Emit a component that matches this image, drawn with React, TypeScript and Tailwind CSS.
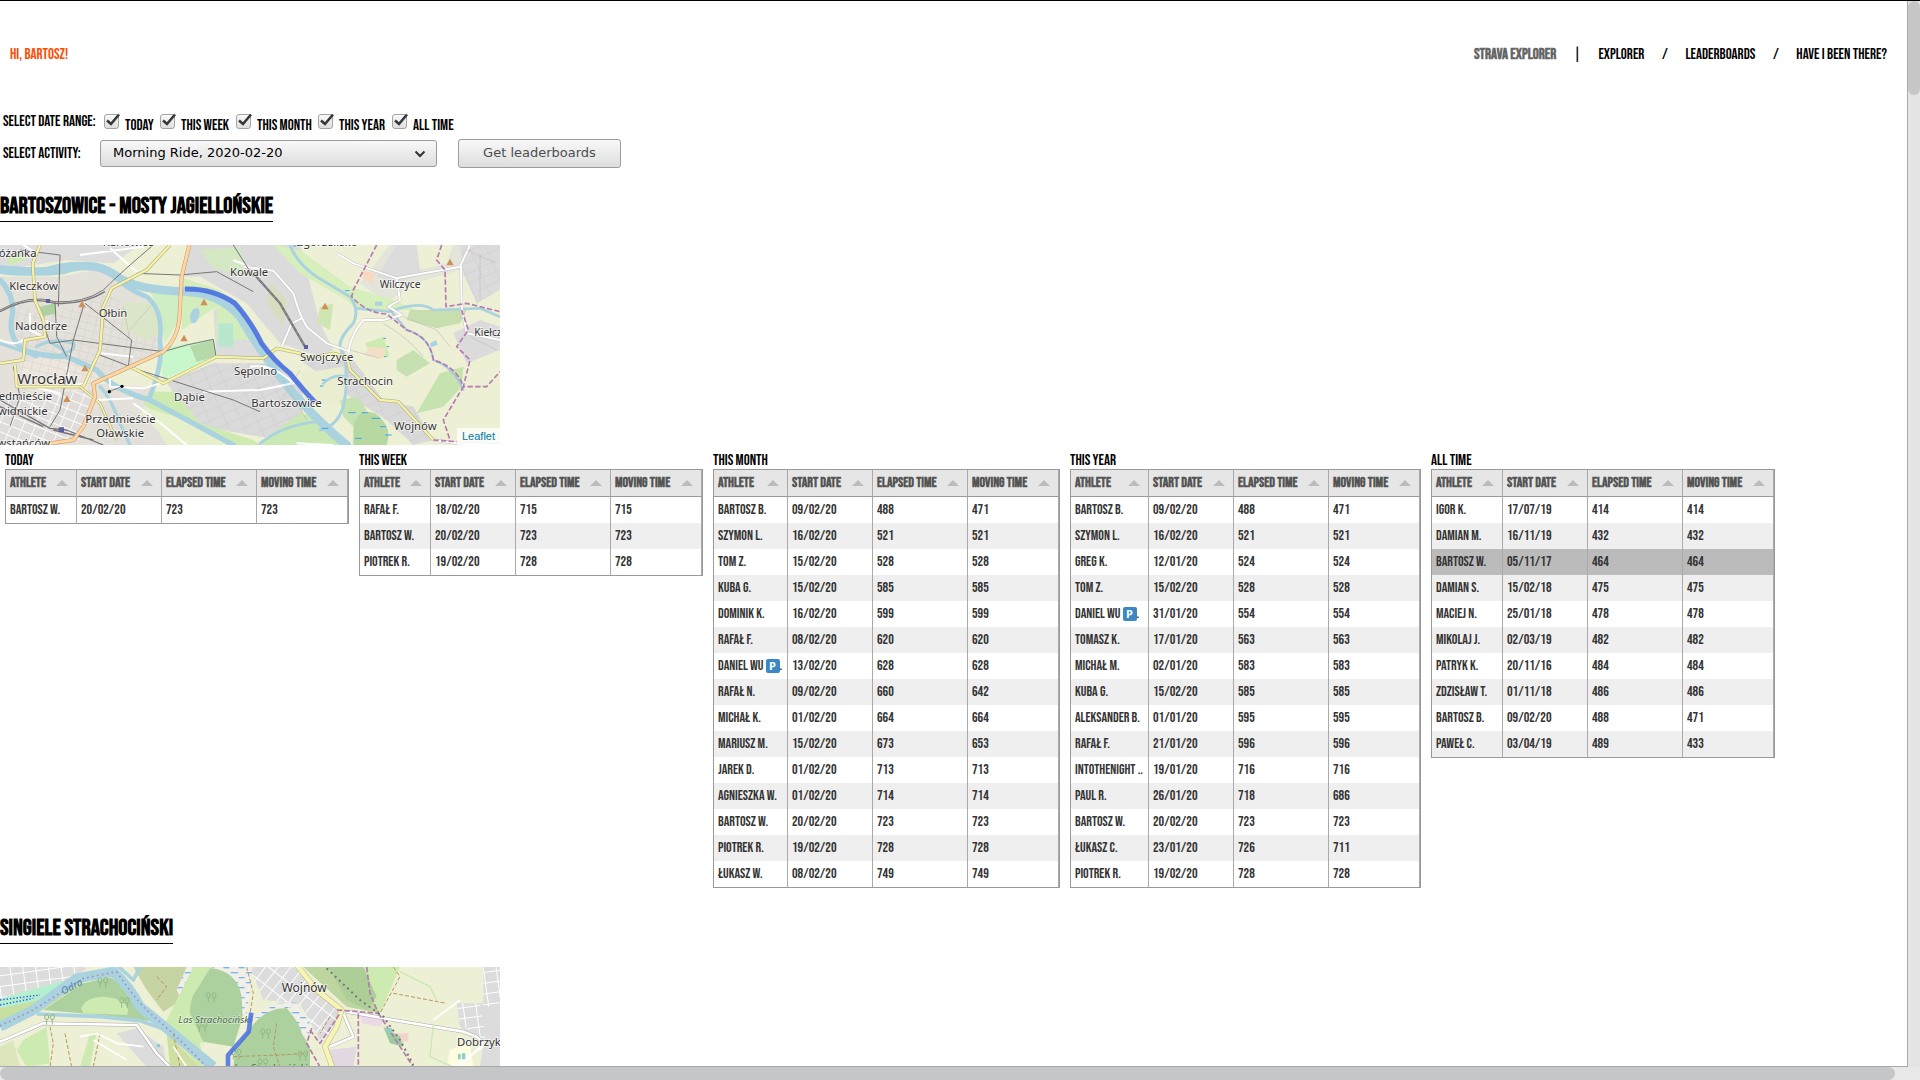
import type { ReactNode } from "react";

type Row = [string, string, number, number];
type Board = { title: string; athleteCol: string; width: string; selected?: number; rows: Row[] };

const BOARDS: Board[] = [
  {
    title: "Today",
    athleteCol: "w-[71px]",
    width: "w-[344px]",
    rows: [["Bartosz W.", "20/02/20", 723, 723]],
  },
  {
    title: "This week",
    athleteCol: "w-[71px]",
    width: "w-[344px]",
    rows: [
      ["Rafał F.", "18/02/20", 715, 715],
      ["Bartosz W.", "20/02/20", 723, 723],
      ["Piotrek R.", "19/02/20", 728, 728],
    ],
  },
  {
    title: "This month",
    athleteCol: "w-[74px]",
    width: "w-[347px]",
    rows: [
      ["Bartosz B.", "09/02/20", 488, 471],
      ["Szymon L.", "16/02/20", 521, 521],
      ["Tom Z.", "15/02/20", 528, 528],
      ["Kuba G.", "15/02/20", 585, 585],
      ["Dominik K.", "16/02/20", 599, 599],
      ["Rafał F.", "08/02/20", 620, 620],
      ["Daniel Wu 🅿.", "13/02/20", 628, 628],
      ["Rafał N.", "09/02/20", 660, 642],
      ["Michał K.", "01/02/20", 664, 664],
      ["Mariusz M.", "15/02/20", 673, 653],
      ["Jarek D.", "01/02/20", 713, 713],
      ["Agnieszka W.", "01/02/20", 714, 714],
      ["Bartosz W.", "20/02/20", 723, 723],
      ["Piotrek R.", "19/02/20", 728, 728],
      ["Łukasz W.", "08/02/20", 749, 749],
    ],
  },
  {
    title: "This year",
    athleteCol: "w-[78px]",
    width: "w-[351px]",
    rows: [
      ["Bartosz B.", "09/02/20", 488, 471],
      ["Szymon L.", "16/02/20", 521, 521],
      ["Greg K.", "12/01/20", 524, 524],
      ["Tom Z.", "15/02/20", 528, 528],
      ["Daniel Wu 🅿.", "31/01/20", 554, 554],
      ["Tomasz K.", "17/01/20", 563, 563],
      ["Michał M.", "02/01/20", 583, 583],
      ["Kuba G.", "15/02/20", 585, 585],
      ["Aleksander B.", "01/01/20", 595, 595],
      ["Rafał F.", "21/01/20", 596, 596],
      ["Intothenight ..", "19/01/20", 716, 716],
      ["Paul R.", "26/01/20", 718, 686],
      ["Bartosz W.", "20/02/20", 723, 723],
      ["Łukasz C.", "23/01/20", 726, 711],
      ["Piotrek R.", "19/02/20", 728, 728],
    ],
  },
  {
    title: "All time",
    athleteCol: "w-[71px]",
    width: "w-[344px]",
    selected: 2,
    rows: [
      ["Igor K.", "17/07/19", 414, 414],
      ["Damian M.", "16/11/19", 432, 432],
      ["Bartosz W.", "05/11/17", 464, 464],
      ["Damian S.", "15/02/18", 475, 475],
      ["Maciej N.", "25/01/18", 478, 478],
      ["Mikolaj J.", "02/03/19", 482, 482],
      ["Patryk K.", "20/11/16", 484, 484],
      ["Zdzisław T.", "01/11/18", 486, 486],
      ["Bartosz B.", "09/02/20", 488, 471],
      ["Paweł C.", "03/04/19", 489, 433],
    ],
  },
];

function AthleteName({ name }: { name: string }) {
  const [before, after] = name.split("🅿");
  if (after === undefined) return <>{name}</>;
  return (
    <span className="flex items-center">
      <span className="whitespace-pre">{before.trimEnd()}</span>
      <span className="ml-0.5 flex size-3.5 shrink-0 items-center justify-center rounded-[2px] bg-[#3b88c3] font-['Open_Sans',sans-serif] text-[11px] leading-3 font-bold text-white">
        P
      </span>
      {after}
    </span>
  );
}

function Leaderboard({ board }: { board: Board }) {
  return (
    <section className="shrink-0">
      <h3 className="h-6 pt-1 text-[15px] leading-6 font-medium">{board.title}</h3>
      <table
        className={`${board.width} table-fixed border-separate border-spacing-0 border border-[#999] text-left text-[14px] leading-5 text-[#333]`}
      >
        <colgroup>
          <col className={board.athleteCol} />
          <col className="w-[85px]" />
          <col className="w-[95px]" />
          <col className="w-[91px]" />
        </colgroup>
        <thead>
          <tr className="h-[27px] bg-[#e6e6e6] text-[#555]">
            {["Athlete", "Start date", "Elapsed time", "Moving time"].map((label) => (
              <th key={label} className="border-r border-b border-r-[#aaa] border-b-[#999] py-0 pr-2 pl-1">
                <div className="flex items-center justify-between whitespace-nowrap">
                  {label}
                  <span className="border-x-[6px] border-b-[6px] border-x-transparent border-b-[#bbb]" />
                </div>
              </th>
            ))}
          </tr>
        </thead>
        <tbody>
          {board.rows.map((row, i) => (
            <tr
              key={i}
              className={`h-[26px] ${i === board.selected ? "bg-[#bbb]" : i % 2 ? "bg-[#efefef]" : "bg-white"}`}
            >
              {row.map((cell, j) => (
                <td key={j} className="overflow-hidden border-r border-[#aaa] py-0 pr-0 pl-1 whitespace-nowrap">
                  {j === 0 ? <AthleteName name={row[0]} /> : cell}
                </td>
              ))}
            </tr>
          ))}
        </tbody>
      </table>
    </section>
  );
}

/* ---------- map drawing helpers ---------- */

function Line({ d, c, w, dash }: { d: string; c: string; w: number; dash?: string }) {
  return <path d={d} fill="none" stroke={c} strokeWidth={w} strokeDasharray={dash} strokeLinejoin="round" />;
}

function Road({ d, c, w, edge }: { d: string; c: string; w: number; edge: string }) {
  return (
    <>
      <Line d={d} c={edge} w={w + 3} />
      <Line d={d} c={c} w={w} />
    </>
  );
}

function Place({ x, y, size = 34, children }: { x: number; y: number; size?: number; children: ReactNode }) {
  return (
    <text
      x={x}
      y={y}
      fontSize={size}
      fill="#333"
      stroke="#fff"
      strokeOpacity={0.7}
      strokeWidth={5}
      paintOrder="stroke"
      fontFamily="'Noto Sans', sans-serif"
    >
      {children}
    </text>
  );
}

const peak = (x: number, y: number) => `M${x - 11} ${y + 10}L${x} ${y - 10}L${x + 11} ${y + 10}z`;

function WroclawMap() {
  return (
    <svg viewBox="0 15 1500 600" className="block size-full" role="img" aria-label="Bartoszowice - Mosty Jagiellońskie">
      <defs>
        <pattern id="blocks" width="26" height="22" patternUnits="userSpaceOnUse" patternTransform="rotate(14)">
          <path d="M0 0H26M0 0V22" stroke="#c9c5c3" strokeWidth="2" fill="none" />
        </pattern>
        <pattern id="whiteBlocks" width="34" height="28" patternUnits="userSpaceOnUse" patternTransform="rotate(22)">
          <path d="M0 0H34M0 0V28" stroke="#fff" strokeWidth="5" fill="none" />
        </pattern>
        <pattern id="lots" width="44" height="30" patternUnits="userSpaceOnUse" patternTransform="rotate(-24)">
          <path d="M0 0H44M0 0V30" stroke="#c6c4c4" strokeWidth="2" fill="none" />
        </pattern>
      </defs>
      <rect y="15" width="1500" height="600" fill="#eef0d5" />
      {/* built-up areas */}
      <path d="M0 15H420L340 70L200 60L0 90z" fill="#deddde" />
      <path d="M0 110L180 110L330 80L420 160L480 220L490 330L380 380L270 430L450 440L480 470L420 520L500 615H0z" fill="#e4e0da" />
      <path d="M40 190L140 230L320 160L470 250L485 330L290 410L60 360z" fill="url(#blocks)" />
      <path d="M60 370L200 330L300 400L270 470L80 470z" fill="#ece6dc" />
      <path d="M60 370L200 330L300 400L270 470L80 470z" fill="url(#blocks)" />
      <path d="M0 470L280 450L240 600L0 615z" fill="#dfdcda" />
      <path d="M0 470L280 450L240 600L0 615z" fill="url(#whiteBlocks)" />
      <path d="M300 490L420 520L520 615H330L270 570z" fill="#e2dfda" />
      <path d="M570 15H900L960 250L1000 330L960 350L840 310L740 190L600 110L550 110z" fill="#dcdbdb" />
      <path d="M640 210L690 190L790 330L830 360L650 350z" fill="#dcdcdc" />
      <path d="M500 425L640 370L840 370L910 440L900 600L780 590L610 560L520 460z" fill="#dadada" />
      <path d="M500 425L640 370L840 370L910 440L900 600L780 590L610 560L520 460z" fill="url(#lots)" />
      <path d="M1170 15L1420 15L1380 90L1240 130L1160 190L1080 130z" fill="#e3e4da" />
      <path d="M1190 15L1260 15L1270 100L1190 130L1130 110z" fill="#dddcdc" />
      <path d="M1380 15H1500V150L1430 190L1390 100z" fill="#dcdbdb" />
      <path d="M1380 15H1500V150L1430 190L1390 100z" fill="url(#lots)" />
      <path d="M1250 15H1360L1340 70L1260 90z" fill="#edf0d4" />
      <path d="M900 360L1060 360L1150 480L1240 500L1300 600L1240 615L1160 540L1050 470z" fill="#dad9d9" />
      <path d="M900 360L1060 360L1150 480L1240 500L1300 600L1240 615L1160 540L1050 470z" fill="url(#lots)" />
      <path d="M900 400L1030 380L1040 470L1010 500L940 480z" fill="#eaedcf" />
      <path d="M1360 280L1440 240L1500 260V330L1400 370z" fill="#dcdbdb" />
      {/* greenery */}
      <path d="M370 185L470 190L480 280L440 300L370 270z" fill="#dbe6c9" />
      <path d="M440 130L545 160L530 250L495 310L480 220z" fill="#d0eec4" />
      <path d="M550 115L660 150L730 220L750 300L650 300L650 200L545 270z" fill="#d3edbd" />
      <path d="M505 320L640 298L650 350L540 395L490 420L480 350z" fill="#c8f7cc" />
      <path d="M570 318L640 300L646 350L590 365z" fill="#b5d9a8" />
      <path d="M445 455L520 455L600 550L760 600L780 615H560L430 490z" fill="#cdebb0" />
      <path d="M430 500L560 540L700 615H500z" fill="#e6f0cc" />
      <path d="M770 615L900 520L960 530L1020 615z" fill="#c9e8b4" />
      <path d="M1020 480L1070 470L1100 510L1060 560L1030 530z" fill="#c4e3b0" />
      <path d="M820 15L900 30L1050 140L1180 180L1250 210L1070 210L1040 180L900 100z" fill="#d6efbc" />
      <path d="M1230 210L1400 210L1380 250L1310 265L1220 240z" fill="#c7dfae" />
      <path d="M1190 360L1240 330L1290 370L1220 410L1190 390z" fill="#c7e0b2" />
      <path d="M1095 310L1150 290L1170 350L1110 340z" fill="#cdebb0" />
      <path d="M1110 320L1160 325L1150 355L1090 345z" fill="#f3dfc6" />
      <path d="M1320 400L1390 380L1385 440L1330 500L1250 520z" fill="#c6e2ae" />
      <path d="M810 130L860 180L850 260L800 190z" fill="#d7dec0" />
      <path d="M960 200L1000 190L990 270L950 250z" fill="#cfe6b4" />
      <path d="M1060 560Q1075 500 1125 520Q1180 560 1160 615H1060z" fill="#b6d9a2" />
      <path d="M120 200L165 190L170 220L125 230z" fill="#aed1a0" />
      <path d="M20 50L70 40L75 60L30 75z" fill="#cdebb0" />
      <path d="M600 30L720 20L740 110L640 85z" fill="#d5e8c4" />
      <path d="M655 250h45v70h-45z" fill="#b9e7cd" />
      <path d="M1085 90L1125 100L1120 130L1090 120z" fill="#f6d9c2" />
      {/* water */}
      <g strokeLinecap="round">
        <Line d="M0 95Q60 105 120 95Q240 50 330 95Q380 150 440 170Q490 210 480 300Q490 370 450 470" c="#aad3df" w={14} />
        <Line d="M0 88Q110 100 190 90Q280 60 345 105Q400 150 560 155Q660 160 720 230Q790 350 880 460Q960 550 1040 615" c="#aad3df" w={26} />
        <Line d="M0 120Q40 160 38 220Q20 290 70 330Q130 350 200 350L290 390Q340 450 450 480Q560 540 700 615" c="#aad3df" w={16} />
        <Line d="M0 310Q60 330 110 350M110 320Q160 290 220 310Q230 330 190 340M150 305L190 330M300 440Q330 470 360 550L390 615" c="#aad3df" w={10} />
        <Line d="M870 15Q890 70 950 110L1050 170Q1080 210 1060 250Q1000 310 1030 340Q1050 400 1030 500Q1010 560 960 570" c="#aad3df" w={9} />
        <Line d="M780 610Q860 550 960 545M970 430Q1000 400 1040 410M1070 205L1170 215Q1260 180 1300 210L1440 205L1500 230" c="#aad3df" w={8} />
        <Line d="M1170 210L1220 270Q1290 290 1300 360Q1360 380 1390 450" c="#a7c9dc" w={6} />
        <path d="M570 230Q575 200 595 205Q605 220 590 245Q572 260 570 230zM1125 185h22v12h-22zM1290 310l18 -10l5 14l-20 8z" fill="#aad3df" />
      </g>
      {/* minor streets */}
      <Line
        d="M70 15L110 40M240 45L430 20M330 25L410 95M700 60L760 85M0 300Q40 320 70 300M90 220L90 270L130 290M300 340L400 350M330 410L330 440L430 445L480 430M400 490L470 540L560 615M290 480L400 475M610 455L780 450M100 440L180 460M200 380L210 440L250 430M130 240L200 270M1000 615L890 610M750 380Q820 370 880 430L780 450"
        c="#fff"
        w={6}
      />
      <Road
        d="M730 80L820 92L880 160Q900 230 920 260L980 310L1050 335M845 320L875 250L905 235M1010 40L1060 70L1190 115L1380 80L1410 15M1383 80L1385 200L1400 280L1500 300M1190 115L1200 180L1165 200L1205 225L1150 240L1090 240Q1040 300 1045 370M1300 600L1370 610L1500 615"
        c="#fff"
        w={6}
        edge="#c4c0c0"
      />
      <Line
        d="M1050 330L1140 355M1150 250Q1220 290 1270 350M1210 230L1310 270L1350 320M1400 30L1490 70M1440 40V180M1410 290L1490 330M850 420L920 540M900 390L850 470M370 200L390 300M450 200L390 270"
        c="#c1bcbc"
        w={2}
      />
      {/* tracks */}
      <Line
        d="M0 210Q90 160 165 185Q250 190 310 150Q370 90 460 15M165 185L170 290L200 350M105 180L150 310L220 300L490 335L560 315L640 298L648 350M255 190L395 300L385 380L700 480L780 515M250 200L220 300L180 510L150 560M60 30L180 45L175 200M40 380L60 470L30 560M300 345L390 380M410 100L540 105L650 95L760 155M700 15L760 110"
        c="#777"
        w={3}
      />
      <Line d="M0 480L150 565L200 570L310 615M0 500L130 560M160 570L280 600M0 215Q90 165 165 190Q250 195 315 155" c="#777479" w={4} />
      <Line d="M760 100L840 190L915 320" c="#777" w={7} />
      <Line d="M760 100L840 190L915 320" c="#aaa" w={2} dash="10 8" />
      {/* main roads */}
      <Road d="M120 15L98 70L105 180L130 240L135 290L75 300L70 360L0 370M45 375L50 440L250 440L300 330L310 200L335 145L440 90L510 15" c="#f6f3a8" w={7} edge="#a8a57d" />
      <Road d="M390 380L490 430L650 350L790 355L830 325L900 340L920 355L1000 340L1040 350L1050 390L1140 480L1195 485L1300 600" c="#f4f2a4" w={7} edge="#a9a784" />
      <Road d="M240 440L300 490L350 600" c="#f6f3a8" w={5} edge="#a8a57d" />
      <Road d="M568 15L545 110L538 240Q530 300 490 335L280 430L285 470L250 560L220 600L140 612" c="#fcd6a4" w={9} edge="#c99562" />
      {/* borders */}
      <Line
        d="M1130 15L1060 150L1055 170Q1100 220 1160 222L1220 270Q1290 290 1300 360Q1370 380 1390 440L1330 540L1350 600M1325 15L1310 60L1335 90L1338 200L1400 190L1500 215M1385 210L1405 270L1370 320L1410 360L1390 440L1460 440L1500 395M1300 600L1370 605"
        c="#b57bb0"
        w={5}
        dash="16 7"
      />
      <Line
        d="M1045 518h22M1085 518h18M1115 535h25M1140 560h18M1155 585h20M965 420h12M960 438h10M1150 295h8M1160 320h8M1152 350h8M965 565h20M1065 595h20M880 18h10M1035 152h14"
        c="#3fa0f0"
        w={3}
      />
      {/* recorded ride */}
      <path d="M555 147Q640 145 705 190Q750 240 785 310Q820 360 870 400Q910 450 945 487" fill="none" stroke="#3f67e3" strokeOpacity="0.85" strokeWidth="15" />
      <path d={[peak(246, 192), peak(612, 186), peak(552, 294), peak(255, 384), peak(201, 476), peak(975, 198), peak(1350, 66)].join("")} fill="#d08f55" />
      <path d="M138 177h12v12h-12zM176 562h16v14h-16zM912 315h12v12h-12z" fill="#5b5f9c" />
      <path d="M328 455L366 439" stroke="#555" strokeWidth="2" />
      <circle cx="328" cy="455" r="5" />
      <circle cx="366" cy="439" r="5" />
      <Place x={-4} y={50}>óżanka</Place>
      <Place x={308} y={18}>Karłowice</Place>
      <Place x={890} y={18}>Zgorzelisko</Place>
      <Place x={28} y={151}>Kleczków</Place>
      <Place x={296} y={232}>Ołbin</Place>
      <Place x={45} y={270}>Nadodrze</Place>
      <Place x={52} y={433} size={45}>Wrocław</Place>
      <Place x={-4} y={481}>edmieście</Place>
      <Place x={-6} y={524}>widnickie</Place>
      <Place x={-8} y={622}>wstańców</Place>
      <Place x={256} y={550}>Przedmieście</Place>
      <Place x={289} y={592}>Oławskie</Place>
      <Place x={522} y={482}>Dąbie</Place>
      <Place x={690} y={107}>Kowale</Place>
      <Place x={702} y={405}>Sępolno</Place>
      <Place x={754} y={502}>Bartoszowice</Place>
      <Place x={900} y={364}>Swojczyce</Place>
      <Place x={1012} y={436}>Strachocin</Place>
      <Place x={1139} y={145} size={31}>Wilczyce</Place>
      <Place x={1423} y={289} size={31}>Kiełcz</Place>
      <Place x={1182} y={571}>Wojnów</Place>
    </svg>
  );
}

const tree = (x: number, y: number) =>
  `M${x} ${y + 18}v-16M${x - 6} ${y - 4}a6 8 0 1 1 12 0a6 8 0 1 1 -12 0M${x + 17} ${y + 18}v-16M${x + 11} ${y - 4}a6 8 0 1 1 12 0a6 8 0 1 1 -12 0`;

function StrachocinMap() {
  return (
    <svg viewBox="0 201 1500 600" className="block size-full" role="img" aria-label="Singiele Strachociński">
      <defs>
        <pattern id="wetland" width="46" height="30" patternUnits="userSpaceOnUse">
          <path d="M2 8H24M26 23H44" stroke="#4aa3ee" strokeWidth="3" />
        </pattern>
        <pattern id="houses" width="48" height="30" patternUnits="userSpaceOnUse" patternTransform="rotate(-52)">
          <path d="M0 0H48M0 0V30" stroke="#fff" strokeWidth="6" fill="none" />
        </pattern>
        <pattern id="estate" width="38" height="32" patternUnits="userSpaceOnUse" patternTransform="rotate(-8)">
          <path d="M0 0H38M0 0V32" stroke="#fff" strokeWidth="6" fill="none" />
        </pattern>
      </defs>
      <rect y="201" width="1500" height="600" fill="#eef0d5" />
      <path d="M0 201H270L150 270L0 300z" fill="#dddcdc" />
      <path d="M0 201H270L150 270L0 300z" fill="url(#estate)" />
      <path d="M0 295L200 240L210 260L100 330L0 365z" fill="#b4efcf" />
      <path d="M0 325L120 300L240 240L300 215L120 335L0 380z" fill="#c7dfa0" />
      <path d="M130 330L250 250L330 232L400 270L465 365L300 345z" fill="#add19e" />
      <path d="M243 325Q260 290 310 290Q380 295 385 335L380 345L250 340z" fill="#cdebb0" />
      <path d="M400 201H560L530 310L490 335L440 270z" fill="#c5d4a2" />
      <path d="M560 201H760L740 340L720 350L720 280L540 290L530 270z" fill="#f2efe9" />
      <path d="M560 201H760L740 340L720 350L720 280L540 290L530 270z" fill="url(#wetland)" />
      <path d="M580 201H640Q600 260 580 290L600 350L610 430L640 501H600L490 380L520 320z" fill="#cdebb0" />
      <path d="M630 205Q710 210 725 290L728 350L700 440L610 425L570 340Q570 290 590 270z" fill="#add19e" />
      <path d="M600 425L680 470L670 501H610z" fill="#eef0d5" />
      <path d="M760 350L830 310L890 305L935 380L920 410L890 390L870 320L790 360z" fill="#f2efe9" />
      <path d="M760 350L830 310L890 305L935 380L920 410L890 390L870 320L790 360z" fill="url(#wetland)" />
      <path d="M750 385Q800 320 860 325Q900 370 905 400L930 440V501H700L705 450z" fill="#add19e" />
      <path d="M750 201H890L1020 330L1000 400L960 420L900 310L790 300z" fill="#dddcdc" />
      <path d="M750 201H890L1020 330L1000 400L960 420L900 310L790 300z" fill="url(#houses)" />
      <path d="M910 201H1100L1140 340L1040 320z" fill="#bdd6a0" />
      <path d="M1090 201H1200L1140 340L1110 290z" fill="#cdebb0" />
      <path d="M985 201L1090 201L1130 290L1100 330L1040 300z" fill="#adcf97" />
      <path d="M980 450L1070 440L1060 501H1000z" fill="#e2d8e2" />
      <path d="M1080 340L1160 350L1140 380L1085 370z" fill="#ecd9e6" />
      <path d="M1180 400h45v25h-45z" fill="#f3d3cb" />
      <path d="M1150 380L1200 410L1210 440L1170 430z" fill="#9ccba0" />
      <path d="M1450 201H1500V501H1440L1450 430L1380 380L1370 310L1450 310z" fill="#dddcdc" />
      <path d="M1370 310L1440 310L1460 430L1380 370z" fill="url(#estate)" />
      <path d="M1450 201H1500V320H1450z" fill="url(#estate)" />
      <path d="M1350 450L1410 430L1420 501H1340z" fill="#fdfde0" />
      <path d="M70 420L140 380L150 490L80 501L50 450z" fill="#cdebb0" />
      <path d="M0 440L40 420L60 501H0z" fill="#dce6bd" />
      <path d="M270 400L290 395L270 501H240z" fill="#cdebb0" />
      <path d="M350 400L410 385L490 440L500 501H440z" fill="#dddcdc" />
      <path d="M500 400L560 460L600 501H510z" fill="#cfdfa2" />
      <Line d="M0 380L100 330L230 235L340 215Q390 260 420 320L500 385L640 500" c="#aad3df" w={30} />
      <Line d="M350 195L400 240L420 201M110 342L300 350L420 362L500 390" c="#aad3df" w={11} />
      <Line d="M0 378L100 330L250 235L350 215Q400 290 440 330L540 420L620 501" c="#a38fc0" w={5} dash="5 10" />
      <Line d="M0 300L120 285M0 315L100 295" c="#2c49e0" w={4} dash="4 6" />
      <Line d="M150 380L160 430L150 501M195 400L215 501M300 400L280 501M520 400L540 501M700 470L840 465L920 460M830 370L820 440L840 501M1180 280L1340 310M740 201L760 280L750 340M470 230L500 260L470 300M990 350L960 400M1180 201L1200 230L1140 340" c="#b9975b" w={3} dash="12 6" />
      <Road d="M0 425L60 400L130 370L410 375L470 460L510 501" c="#fff" w={8} edge="#a7a7a7" />
      <Road d="M1040 335L1180 360L1390 395L1430 410L1450 430M1030 340L1060 410L990 440" c="#fff" w={8} edge="#aaa" />
      <Line d="M280 420L380 480M240 410L290 400L350 430L430 440M560 501L520 440M1300 360L1380 300M1450 440L1360 501M1380 501L1450 430" c="#fff" w={5} />
      <Line d="M1200 215L1290 260L1310 300M1300 370L1290 470L1360 501" c="#cbe9b0" w={4} />
      <Road d="M890 195L950 270L1025 330L1010 380L975 440L1000 510" c="#f7f5b5" w={14} edge="#b8b584" />
      <Line d="M1100 201L1110 280L1135 340L1075 335L1010 330M1075 340L1075 501M935 385L920 430L960 501M930 390L960 430L1020 340M1135 340L1240 501" c="#b57bb0" w={5} dash="16 7" />
      <Line d="M980 205L1080 300L1150 350L1200 420L1240 495" c="#777" w={6} dash="6 11" />
      <path
        d={[tree(300, 245), tree(625, 290), tree(788, 398), tree(598, 378), tree(900, 465), tree(700, 460), tree(780, 488), tree(365, 305), tree(140, 355)].join("")}
        fill="none"
        stroke="#92b886"
        strokeWidth="3"
      />
      <path d="M1160 385h16v14h-16zM1374 462h8v16h-8zM1386 460h10v18h-10zM470 432h10v10h-10z" fill="#8ccfc8" />
      <text x="190" y="284" fontSize="30" fontStyle="italic" fill="#4f82b8" fontFamily="'Noto Sans', sans-serif" transform="rotate(-27 190 284)">
        Odra
      </text>
      <text x="535" y="368" fontSize="29" fontStyle="italic" fill="#46684a" stroke="#fff" strokeOpacity={0.5} strokeWidth="4" paintOrder="stroke" fontFamily="'Noto Sans', sans-serif">
        Las Strachociński
      </text>
      <text x="702" y="513" fontSize="29" fontStyle="italic" fill="#46684a" fontFamily="'Noto Sans', sans-serif">
        Las Strachociński
      </text>
      <path d="M754 338L746 395L684 466V560" fill="none" stroke="#3f67e3" strokeOpacity="0.8" strokeWidth="14" strokeLinejoin="round" />
      <Place x={845} y={277} size={36}>Wojnów</Place>
      <Place x={1371} y={438}>Dobrzyk</Place>
    </svg>
  );
}

function Segment({ title, map, className, children }: { title: string; map: ReactNode; className: string; children?: ReactNode }) {
  return (
    <article className={className}>
      <h2 className="mb-[23px] flex h-[33px] w-fit items-center border-b border-black pt-0.5 text-[23px] font-bold whitespace-nowrap">
        {title}
      </h2>
      <div className="relative h-[200px] w-[500px] overflow-hidden normal-case">
        {map}
        <a
          href="#leaflet"
          className="absolute right-0 bottom-0 bg-white/70 px-[5px] font-['Liberation_Sans',sans-serif] text-[11px] leading-[17px] text-[#0078a8]"
        >
          Leaflet
        </a>
      </div>
      {children}
    </article>
  );
}

function RangeOption({ label }: { label: string }) {
  return (
    <label className="flex items-center gap-1.5 whitespace-nowrap">
      <span className="relative mb-0.5 size-[15px]">
        <input
          type="checkbox"
          defaultChecked
          className="peer block size-[15px] appearance-none rounded-[3px] border border-[#a3a3a3] bg-linear-to-b from-[#f9f9f9] to-[#dedede]"
        />
        <svg viewBox="0 0 16 16" className="pointer-events-none absolute bottom-px left-px hidden size-4 peer-checked:block">
          <path d="M2 8.5L6 12L14 2.5" fill="none" stroke="#333839" strokeWidth="2.6" />
        </svg>
      </span>
      <span className="pt-2">{label}</span>
    </label>
  );
}

export default function App() {
  return (
    <div className="flex h-screen flex-col overflow-hidden border-t border-black bg-white font-['Bebas_Neue','Roboto_Condensed','Liberation_Sans',sans-serif] text-black uppercase">
      <div className="flex min-h-0 flex-1">
        <main className="min-w-0 flex-1 overflow-hidden border-r border-b border-[#a8a8a8]">
          <header className="flex h-[106px] items-center justify-between pt-0.5 pr-5 pl-2.5 text-[15px]">
            <p className="text-[#fc4c02]">Hi, Bartosz!</p>
            <nav className="flex items-center whitespace-nowrap">
              <strong className="text-[#666]">Strava Explorer</strong>
              <span className="w-[42px] text-center">|</span>
              <a href="#explorer">Explorer</a>
              <span className="w-[41px] text-center">/</span>
              <a href="#leaderboards">Leaderboards</a>
              <span className="w-[41px] text-center">/</span>
              <a href="#have-i-been-there">Have I been there?</a>
            </nav>
          </header>

          <form className="text-[15px] leading-5" onSubmit={(e) => e.preventDefault()}>
            <fieldset className="flex h-[30px] items-center pl-[3px]">
              <span className="w-[101px] whitespace-nowrap">Select date range:</span>
              <div className="grid grid-cols-[56px_76px_82px_74px_auto]">
                {["Today", "This week", "This month", "This year", "All time"].map((label) => (
                  <RangeOption key={label} label={label} />
                ))}
              </div>
            </fieldset>
            <div className="flex h-8 items-center pl-[3px]">
              <label htmlFor="activity" className="w-[97px] pt-px whitespace-nowrap">
                Select activity:
              </label>
              <div className="relative">
                <select
                  id="activity"
                  className="block h-[27px] w-[337px] appearance-none rounded-[3px] border border-[#9c9c9c] bg-linear-to-b from-[#f8f8f8] to-[#dedede] pl-3 font-['DejaVu_Sans',sans-serif] text-[13px]"
                >
                  <option>Morning Ride, 2020-02-20</option>
                </select>
                <svg viewBox="0 0 12 8" className="pointer-events-none absolute top-[10px] right-[11px] h-2 w-3">
                  <path d="M1.5 1.5L6 6L10.5 1.5" fill="none" stroke="#333" strokeWidth="2" />
                </svg>
              </div>
              <button
                type="submit"
                className="ml-[21px] h-[29px] w-[163px] rounded-[3px] border border-[#9c9c9c] bg-linear-to-b from-[#f8f8f8] to-[#dedede] font-['DejaVu_Sans',sans-serif] text-[13px] text-[#4a4f50]"
              >
                Get leaderboards
              </button>
            </div>
          </form>

          <Segment title="Bartoszowice - Mosty Jagiellońskie" map={<WroclawMap />} className="mt-5">
            <div className="flex items-start gap-2.5 pl-[5px]">
              {BOARDS.map((board) => (
                <Leaderboard key={board.title} board={board} />
              ))}
            </div>
          </Segment>
          <Segment title="Singiele Strachociński" map={<StrachocinMap />} className="mt-[23px]" />
        </main>
        <div className="w-3 bg-[#e4e4e4]">
          <div className="h-[94px] rounded-full bg-[#c5c6c8]" />
        </div>
      </div>
      <div className="flex h-[13px] shrink-0 bg-[#e8e8e8] pr-[25px]">
        <div className="flex-1 rounded-full bg-[#c5c6c8]" />
      </div>
    </div>
  );
}
